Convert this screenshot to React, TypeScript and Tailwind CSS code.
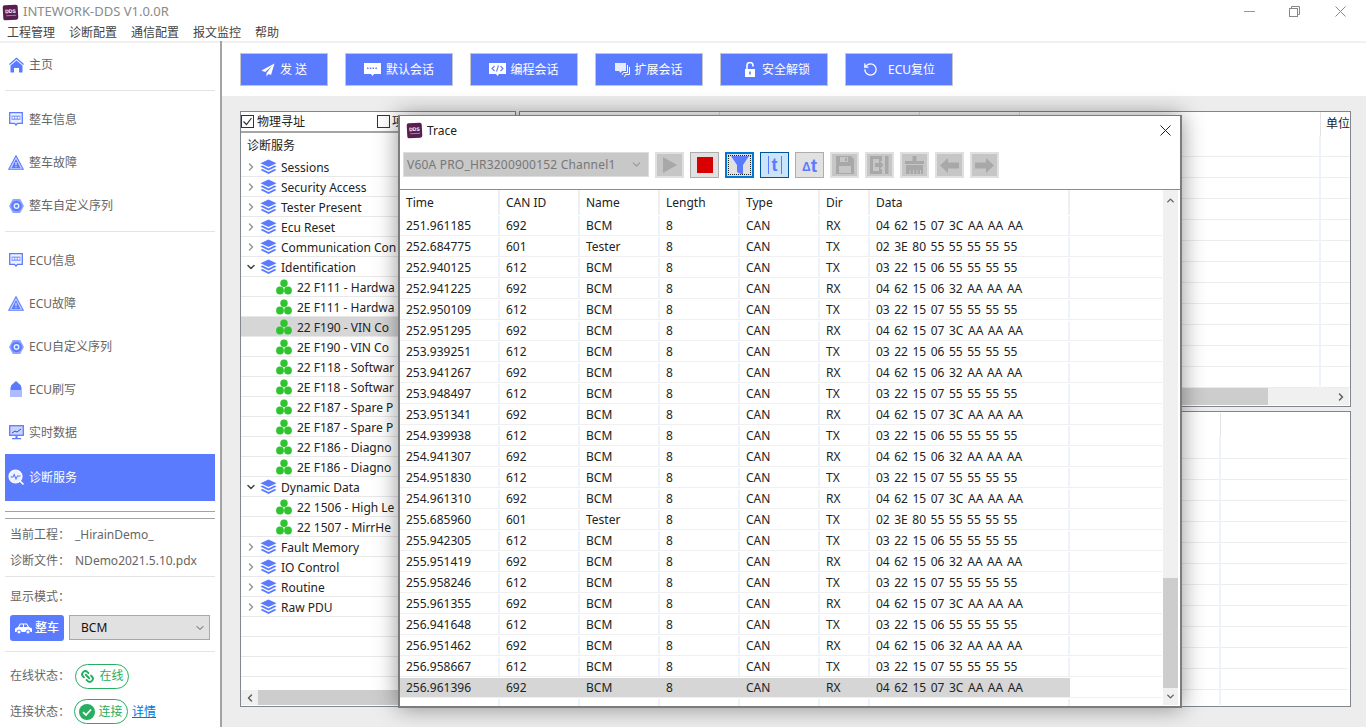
import React from "react";
import { ChevronRight, ChevronDown, ChevronUp, ChevronLeft, RotateCcw, Link2 } from "lucide-react";

const BLUE = "#5b7bff";

function Logo({ s = 16 }: { s?: number }) {
  return (
    <div className="flex flex-col items-center justify-center rounded-[2px] bg-[#5a1d52] text-white font-bold shrink-0 -rotate-3" style={{ width: s, height: s }}>
      <span className="text-[5px] leading-none font-['Liberation_Sans',sans-serif]">DDS</span>
      <span className="w-[10px] h-px bg-[#5fae6a] mt-px" />
    </div>
  );
}

const Home = () => (
  <svg width="15" height="16" viewBox="0 0 15 16"><path d="M7.500 .5 15 7l-.8 1L7.500 2.300 .8 8 0 7z" fill={BLUE} /><path d="M7.500 3.500 13.500 8.500V15.500H10V11H5v4.500H1.500V8.500z" fill={BLUE} /></svg>
);
const Msg = () => (
  <svg width="14" height="15" viewBox="0 0 14 15"><path d="M.7.7h12.600v10.600H8.500L7 13 5.500 11.300H.7z" fill="#eef1ff" stroke={BLUE} strokeWidth="1.300" /><rect x="2.500" y="3.500" width="9" height="4.500" fill="#8fa5ff" /><path d="M3.500 5h1.500v1.500H3.500zM6.200 5h1.500v1.500H6.200zM9 5h1.500v1.500H9z" fill="#fff" /></svg>
);
const Tri = () => (
  <svg width="16" height="15" viewBox="0 0 16 15"><path d="M8 .8 15.300 14.300H.7z" fill="#c9d3ff" stroke={BLUE} strokeWidth="1.100" /><path d="M8 4 12.500 13h-9z" fill={BLUE} /><path d="M7.400 7h1.200v3H7.400zM7.400 11h1.200v1H7.400z" fill="#dfe5ff" /></svg>
);
const Hex = () => (
  <svg width="15" height="14" viewBox="0 0 15 14"><path d="M3.800 0h7.400L15 7l-3.800 7H3.800L0 7z" fill="#8fa5ff" /><circle cx="7.500" cy="7" r="5.300" fill={BLUE} /><circle cx="7.500" cy="7" r="3" fill="#e8ecff" /><circle cx="7.500" cy="7" r="1.500" fill={BLUE} /></svg>
);
const Flash = () => (
  <svg width="12" height="17" viewBox="0 0 12 17"><path d="M6 0 11 4.500V9H1V4.500z" fill={BLUE} /><path d="M.5 6h1v10h-1zM10.500 6h1v10h-1z" fill={BLUE} /><path d="M1.500 9h9v7h-9z" fill="#aebcff" /></svg>
);
const Monitor = () => (
  <svg width="15" height="15" viewBox="0 0 15 15"><rect x=".7" y=".7" width="13.600" height="9.600" fill="#c9d3ff" stroke={BLUE} strokeWidth="1.300" /><path d="M3 8l3-2 2 1 4-3" fill="none" stroke="#3550c8" strokeWidth="1" /><path d="M6.500 11h2v2h-2zM3 13h9v1.300H3z" fill={BLUE} /></svg>
);
const Diag = () => (
  <svg width="17" height="17" viewBox="0 0 17 17"><circle cx="7.500" cy="7.500" r="6.500" fill="#eef1ff" stroke="#fff" strokeWidth="1.200" /><path d="M2.500 8H5l1.200-2.500L8 10l1.500-3H12.500" fill="none" stroke={BLUE} strokeWidth="1.100" /><path d="M12 12l3.500 3.500" stroke="#fff" strokeWidth="1.700" /></svg>
);
const Layers = () => (
  <svg width="17" height="16" viewBox="0 0 17 16" className="shrink-0">
    <path d="M8.500.5 16.500 4.200 8.500 7.900.5 4.200z" fill={BLUE} />
    <path d="M2.500 6.500.5 7.500l8 3.900 8-3.900-2-1-6 2.900z" fill={BLUE} />
    <path d="M2.500 10 .5 11l8 4 8-4-2-1-6 3z" fill={BLUE} />
  </svg>
);
const Leaf = () => (
  <svg width="16" height="16" viewBox="0 0 16 16" className="shrink-0">
    <circle cx="8" cy="4.200" r="3.700" fill="#2dc42d" />
    <circle cx="4" cy="11.500" r="3.900" fill="#2dc42d" />
    <circle cx="12" cy="11.500" r="3.900" fill="#2dc42d" />
  </svg>
);

const Send = () => (
  <svg width="14" height="14" viewBox="0 0 14 14"><path d="M13.500.5 .5 7.500l3.500 1.500 7-6-5.500 7v3.500l2-2.500 2.500 1z" fill="#fff" /></svg>
);
const Bubble = () => (
  <svg width="17" height="15" viewBox="0 0 17 15"><path d="M0 1h17v11H10l-1.500 2L7 12H0z" fill="#fff" /><path d="M3 5.500h1.500V7H3zM5.800 5.500h1.500V7H5.800zM8.600 5.500h1.500V7H8.600zM11.400 5.500h1.500V7h-1.500z" fill={BLUE} /></svg>
);
const Code = () => (
  <svg width="17" height="15" viewBox="0 0 17 15"><path d="M0 1h17v11H10l-1.500 2L7 12H0z" fill="#fff" /><path d="M5.500 4 3 6.500 5.500 9M11.500 4 14 6.500 11.500 9M9.500 3.500l-2 6" fill="none" stroke={BLUE} strokeWidth="1.100" /></svg>
);
const Ext = () => (
  <svg width="15" height="16" viewBox="0 0 15 16"><path d="M0 1h11v8H7l-1.500 2L4 9H0z" fill="#e6eaff" /><path d="M12.500 3v7.500H8.500L7 13M14.500 5v7.500h-4L9.500 15" fill="none" stroke="#fff" strokeWidth="1" /></svg>
);
const Unlock = () => (
  <svg width="12" height="15" viewBox="0 0 12 15"><path d="M1 7h10v8H1z" fill="#fff" /><path d="M3 7V3.500a3 3 0 0 1 6 0V4.500" fill="none" stroke="#fff" strokeWidth="1.600" /><path d="M5.200 9.500h1.600v3H5.200z" fill={BLUE} /></svg>
);

function Tool({ w, gap = "gap-[5px]", icon, children }: { w: string; gap?: string; icon: React.ReactNode; children: React.ReactNode }) {
  return (
    <button className={`${w} ${gap} h-[33px] flex items-center justify-center bg-[#5b7bff] border border-[#c4c6cc] text-white text-[12px] shrink-0`}>
      {icon}
      <span className="whitespace-pre">{children}</span>
    </button>
  );
}

function Nav({ icon, label, active, h = "h-[43px]" }: { icon: React.ReactNode; label: string; active?: boolean; h?: string }) {
  return (
    <div className={`${h} shrink-0 mx-[5px] pl-[2px] flex items-center gap-[4px] text-[12px] ${active ? "bg-[#5b7bff] text-white" : "text-[#666]"}`}>
      <span className="w-[18px] flex justify-center shrink-0">{icon}</span>
      <span>{label}</span>
    </div>
  );
}

const Rule = ({ c = "bg-[#e4e4e4]" }: { c?: string }) => <div className={`h-px mx-[5px] shrink-0 ${c}`} />;
const Gap = ({ c }: { c: string }) => <div className={`shrink-0 ${c}`} />;

type Node = { t: string; kind: "open" | "closed" | "leaf"; sel?: boolean };
const tree: Node[] = [
  { t: "Sessions", kind: "closed" },
  { t: "Security Access", kind: "closed" },
  { t: "Tester Present", kind: "closed" },
  { t: "Ecu Reset", kind: "closed" },
  { t: "Communication Con", kind: "closed" },
  { t: "Identification", kind: "open" },
  { t: "22 F111 - Hardwa", kind: "leaf" },
  { t: "2E F111 - Hardwa", kind: "leaf" },
  { t: "22 F190 - VIN Co", kind: "leaf", sel: true },
  { t: "2E F190 - VIN Co", kind: "leaf" },
  { t: "22 F118 - Softwar", kind: "leaf" },
  { t: "2E F118 - Softwar", kind: "leaf" },
  { t: "22 F187 - Spare P", kind: "leaf" },
  { t: "2E F187 - Spare P", kind: "leaf" },
  { t: "22 F186 - Diagno", kind: "leaf" },
  { t: "2E F186 - Diagno", kind: "leaf" },
  { t: "Dynamic Data", kind: "open" },
  { t: "22 1506 - High Le", kind: "leaf" },
  { t: "22 1507 - MirrHe", kind: "leaf" },
  { t: "Fault Memory", kind: "closed" },
  { t: "IO Control", kind: "closed" },
  { t: "Routine", kind: "closed" },
  { t: "Raw PDU", kind: "closed" },
];

function TreeRow({ n }: { n: Node }) {
  return (
    <div className={`h-[20px] flex items-center border-b border-[#e8e8e8] whitespace-nowrap overflow-hidden ${n.sel ? "bg-[#d6d6d6]" : ""}`}>
      {n.kind === "leaf" ? (
        <span className="flex items-center gap-[5px] pl-[35px]"><Leaf /><span className="pt-[2px]">{n.t}</span></span>
      ) : (
        <>
          <span className="w-[19px] flex justify-center pl-[1px] shrink-0">
            {n.kind === "open" ? <ChevronDown size={12} strokeWidth={3} color="#444" /> : <ChevronRight size={12} strokeWidth={3} color="#999" />}
          </span>
          <Layers />
          <span className="ml-[4px] pt-[2px]">{n.t}</span>
        </>
      )}
    </div>
  );
}

const d7 = "03 22 15 07 55 55 55 55";
const d6 = "03 22 15 06 55 55 55 55";
const r7 = "04 62 15 07 3C AA AA AA";
const r6 = "04 62 15 06 32 AA AA AA";
const tp = "02 3E 80 55 55 55 55 55";
const rows: [string, string, string, string, string][] = [
  ["251.961185", "692", "BCM", "RX", r7],
  ["252.684775", "601", "Tester", "TX", tp],
  ["252.940125", "612", "BCM", "TX", d6],
  ["252.941225", "692", "BCM", "RX", r6],
  ["252.950109", "612", "BCM", "TX", d7],
  ["252.951295", "692", "BCM", "RX", r7],
  ["253.939251", "612", "BCM", "TX", d6],
  ["253.941267", "692", "BCM", "RX", r6],
  ["253.948497", "612", "BCM", "TX", d7],
  ["253.951341", "692", "BCM", "RX", r7],
  ["254.939938", "612", "BCM", "TX", d6],
  ["254.941307", "692", "BCM", "RX", r6],
  ["254.951830", "612", "BCM", "TX", d7],
  ["254.961310", "692", "BCM", "RX", r7],
  ["255.685960", "601", "Tester", "TX", tp],
  ["255.942305", "612", "BCM", "TX", d6],
  ["255.951419", "692", "BCM", "RX", r6],
  ["255.958246", "612", "BCM", "TX", d7],
  ["255.961355", "692", "BCM", "RX", r7],
  ["256.941648", "612", "BCM", "TX", d6],
  ["256.951462", "692", "BCM", "RX", r6],
  ["256.958667", "612", "BCM", "TX", d7],
  ["256.961396", "692", "BCM", "RX", r7],
];

const cols = ["w-[100px]", "w-[80px]", "w-[80px]", "w-[80px]", "w-[80px]", "w-[50px]", "w-[200px] [word-spacing:1.4px]"];

function TraceRow({ cells, sel, h = "h-[21px]", head }: { cells: string[]; sel?: boolean; h?: string; head?: boolean }) {
  return (
    <div className={`${h} flex ${head ? "" : "border-b border-[#f0f0f0] pt-px"}`}>
      {cols.map((c, i) => (
        <div key={c} className={`${c} shrink-0 pl-[6px] flex items-center whitespace-nowrap border-r-2 ${sel ? "bg-[#d6d6d6] border-[#d6d6d6]" : head ? "border-[#efefef]" : "border-[#eef3fb]"}`}>
          {cells[i]}
        </div>
      ))}
      <div className="flex-1" />
    </div>
  );
}

function TBtn({ cls, children }: { cls: string; children: React.ReactNode }) {
  return <div className={`w-[29px] h-[26px] flex items-center justify-center shrink-0 ${cls}`}>{children}</div>;
}
const off = "bg-[#c6c6c6] border-2 border-[#e0e0e0]";
const G = "#a8a8a8";

function Trace() {
  return (
    <div className="absolute left-[398px] top-[115px] w-[784px] h-[593px] bg-white border-[#7a7d80] border-t border-x-2 border-b-2 shadow-[0_0_22px_rgba(0,0,0,0.42)] flex flex-col text-[12px] text-[#222]">
      <div className="h-[29px] flex items-center pl-[7px] shrink-0">
        <Logo s={15} />
        <span className="ml-[5px]">Trace</span>
        <svg width="11" height="11" viewBox="0 0 11 11" className="ml-auto mr-[9px]"><path d="M.5.5l10 10M10.500.5l-10 10" stroke="#222" strokeWidth="1" /></svg>
      </div>
      <div className="h-[45px] flex gap-[6px] pl-[3px] pt-[7px] shrink-0 border-b border-[#8c8c8c]">
        <div className="w-[246px] h-[25px] bg-[#c8c8c8] border border-[#dcdcdc] flex items-center pl-[3px] text-[#777] whitespace-nowrap tracking-[0.2px]">
          <span>V60A PRO_HR3200900152 Channel1</span>
          <ChevronDown size={13} color="#999" className="ml-auto mr-[5px]" />
        </div>
        <TBtn cls={off}><svg width="14" height="16" viewBox="0 0 14 16"><path d="M0 0 14 8 0 16z" fill={G} /></svg></TBtn>
        <TBtn cls="bg-[#e1e1e1] border border-[#adadad]"><span className="w-[16px] h-[16px] bg-[#d80000]" /></TBtn>
        <TBtn cls="bg-[#e1e1e1] border-2 border-[#0078d7] outline-1 outline-dotted -outline-offset-4 outline-[#222]"><svg width="18" height="19" viewBox="0 0 18 19"><path d="M0 0h18l-6 9v10l-6-3V9z" fill={BLUE} /></svg></TBtn>
        <TBtn cls="bg-[#cce4f7] border border-[#005499]">
          <span className="flex items-center gap-[3px]">
            <span className="w-px h-[18px] bg-[#5b7bff]" />
            <span className="text-[#5b7bff] font-bold text-[18px] leading-none font-['Liberation_Sans',sans-serif]">t</span>
            <span className="w-px h-[18px] bg-[#5b7bff]" />
          </span>
        </TBtn>
        <TBtn cls="bg-[#e1e1e1] border border-[#adadad]"><span className="text-[#5b7bff] font-bold text-[19px] leading-none font-['Liberation_Sans',sans-serif] flex items-end"><span className="text-[12px] leading-[15px]">Δ</span>t</span></TBtn>
        <TBtn cls={off}><svg width="18" height="18" viewBox="0 0 18 18"><path d="M0 0h15l3 3v15H0z" fill={G} /><path d="M4 1h8v5H4z" fill="#c6c6c6" /><path d="M9 2h2v3H9z" fill={G} /><path d="M3 10h12v7H3z" fill="#c6c6c6" /></svg></TBtn>
        <TBtn cls={off}><svg width="19" height="18" viewBox="0 0 19 18"><path d="M0 0h12v5H9V3H3v12h6v-2h3v5H0z" fill={G} /><path d="M5 7h4V4l4.500 5L9 14v-3H5z" fill={G} /><path d="M15 0h3.500v18H15z" fill={G} /></svg></TBtn>
        <TBtn cls={off}><svg width="19" height="18" viewBox="0 0 19 18"><path d="M7.500 0h4v5H19v3H0V5h7.500z" fill={G} /><path d="M1 9h17v9h-2v-4h-1v4h-2.500v-4h-1v4H9v-4H8v4H5.500v-4h-1v4H1z" fill={G} /></svg></TBtn>
        <TBtn cls={off}><svg width="19" height="15" viewBox="0 0 19 15"><path d="M8 0v4.500h11v6H8V15L0 7.500z" fill={G} /></svg></TBtn>
        <TBtn cls={off}><svg width="19" height="15" viewBox="0 0 19 15"><path d="M11 0v4.500H0v6h11V15l8-7.500z" fill={G} /></svg></TBtn>
      </div>
      <div className="flex-1 flex min-h-0 overflow-hidden">
        <div className="flex-1 pr-[1px] overflow-hidden">
          <TraceRow head h="h-[25px]" cells={["Time", "CAN ID", "Name", "Length", "Type", "Dir", "Data"]} />
          {rows.map((r, i) => (
            <TraceRow key={r[0]} sel={i === rows.length - 1} cells={[r[0], r[1], r[2], "8", "CAN", r[3], r[4]]} />
          ))}
          <TraceRow cells={["", "", "", "", "", "", ""]} />
        </div>
        <div className="w-[15px] shrink-0 mb-px bg-[#f0f0f0] flex flex-col items-center">
          <div className="h-[20px] flex items-center"><ChevronUp size={11} strokeWidth={3} color="#606060" /></div>
          <div className="flex-1" />
          <div className="h-[110px] w-full bg-[#cdcdcd]" />
          <div className="h-[17px] flex items-center"><ChevronDown size={11} strokeWidth={3} color="#606060" /></div>
        </div>
        <div className="w-[2px]" />
      </div>
    </div>
  );
}

function BgLines({ n }: { n: number }) {
  return (
    <>
      {Array.from({ length: n }).map((_, i) => (
        <div key={i} className="h-[21px] border-b border-[#ededed]" />
      ))}
    </>
  );
}

export default function App() {
  return (
    <div className="relative w-[1366px] h-[727px] overflow-hidden bg-white flex flex-col font-['Noto_Sans','Noto_Sans_CJK_SC',sans-serif]">
      {/* title */}
      <div className="h-[22px] flex items-center pl-[3px] pt-[2px] shrink-0 text-[#8a8a8a] text-[13px]">
        <Logo s={15} />
        <span className="ml-[5px]">INTEWORK-DDS V1.0.0R</span>
        <div className="ml-auto flex items-center pr-[20px] pb-[2px]">
          <svg width="11" height="11" viewBox="0 0 11 11"><path d="M0 5.500h11" stroke="#999" /></svg>
          <svg width="11" height="11" viewBox="0 0 11 11" fill="none" stroke="#888" className="ml-[34px]"><rect x=".5" y="2.500" width="8" height="8" /><path d="M2.500 2.500V.5h8v8h-2" /></svg>
          <svg width="11" height="11" viewBox="0 0 11 11" className="ml-[35px]"><path d="M.5.5l10 10M10.500.5l-10 10" stroke="#888" /></svg>
        </div>
      </div>
      <div className="h-[19px] flex items-center gap-[14px] pl-[7px] pt-[2px] text-[12px] text-[#444] shrink-0">
        <span>工程管理</span><span>诊断配置</span><span>通信配置</span><span>报文监控</span><span>帮助</span>
      </div>
      <div className="h-[2px] bg-[#f0f0f0] shrink-0" />
      <div className="flex-1 flex min-h-0">
        {/* sidebar */}
        <aside className="w-[222px] shrink-0 border-r-2 border-[#a3a3a3] flex flex-col overflow-hidden -mt-[2px] pt-[2px]">
          <Nav h="h-[44px]" icon={<Home />} label="主页" />
          <Gap c="h-[3px]" />
          <Rule />
          <Gap c="h-[7px]" />
          <Nav icon={<Msg />} label="整车信息" />
          <Nav icon={<Tri />} label="整车故障" />
          <Nav icon={<Hex />} label="整车自定义序列" />
          <Gap c="h-[4px]" />
          <Rule />
          <Gap c="h-[7px]" />
          <Nav icon={<Msg />} label="ECU信息" />
          <Nav icon={<Tri />} label="ECU故障" />
          <Nav icon={<Hex />} label="ECU自定义序列" />
          <Nav icon={<Flash />} label="ECU刷写" />
          <Nav icon={<Monitor />} label="实时数据" />
          <Nav h="h-[47px]" active icon={<Diag />} label="诊断服务" />
          <Gap c="h-[10px]" />
          <Rule c="bg-[#a3a3a3]" />
          <Gap c="h-[6px]" />
          <Rule c="bg-[#a3a3a3]" />
          <div className="text-[12px] text-[#666] pl-[10px] shrink-0">
            <div className="h-[26px] mt-[3px] flex items-center"><span className="w-[65px]">当前工程：</span><span>_HirainDemo_</span></div>
            <div className="h-[26px] flex items-center"><span className="w-[65px]">诊断文件：</span><span>NDemo2021.5.10.pdx</span></div>
          </div>
          <Gap c="h-[2px]" />
          <Rule />
          <div className="h-[38px] pl-[10px] pt-[2px] flex items-center text-[12px] text-[#666] shrink-0">显示模式：</div>
          <div className="h-[26px] flex gap-[5px] pl-[10px] pr-[10px] shrink-0">
            <div className="w-[54px] h-[26px] rounded-[3px] bg-[#5b7bff] text-white text-[12px] font-medium flex items-center justify-center gap-[3px]">
              <svg width="17" height="11" viewBox="0 0 17 11"><path d="M3 4 5 .5h7L14 4l3 1.500V9H0V5.500z" fill="#fff" /><path d="M5.500 1.500h2.500V4H4.300zM9 1.500h2.500L12.700 4H9z" fill={BLUE} /><circle cx="4" cy="9" r="2" fill="#fff" stroke={BLUE} /><circle cx="13" cy="9" r="2" fill="#fff" stroke={BLUE} /></svg>
              整车
            </div>
            <div className="flex-1 h-[25px] bg-[#e1e1e1] border border-[#a9a9a9] flex items-center pl-[11px] text-[12px] text-[#111]">
              BCM
              <ChevronDown size={12} color="#555" className="ml-auto mr-[3px]" />
            </div>
          </div>
          <Gap c="h-[10px]" />
          <Rule />
          <div className="pl-[10px] text-[12px] text-[#666] shrink-0">
            <div className="h-[36px] mt-[6px] flex items-center">
              <span className="w-[65px]">在线状态：</span>
              <span className="h-[25px] w-[54px] rounded-full border border-[#27ae60] text-[#27ae60] flex items-center justify-center gap-[4px]"><Link2 size={15} strokeWidth={3} className="rotate-45" />在线</span>
            </div>
            <div className="h-[35px] flex items-center">
              <span className="w-[64px]">连接状态：</span>
              <span className="h-[25px] w-[54px] rounded-full border border-[#27ae60] text-[#27ae60] flex items-center justify-center gap-[3px]">
                <svg width="16" height="16" viewBox="0 0 16 16"><circle cx="8" cy="8" r="8" fill="#27ae60" /><path d="M4 8.200 7 11l5-5.500" fill="none" stroke="#fff" strokeWidth="1.800" /></svg>
                连接
              </span>
              <span className="ml-[4px] text-[#0078d7] underline">详情</span>
            </div>
          </div>
        </aside>
        {/* main */}
        <main className="flex-1 min-w-0 flex flex-col bg-[#ededed]">
          <div className="h-[53px] shrink-0 bg-white flex items-start gap-[17px] pl-[18px] pt-[10px]">
            <Tool w="w-[88px]" icon={<Send />}>{"发 送"}</Tool>
            <Tool w="w-[108px]" icon={<Bubble />}>默认会话</Tool>
            <Tool w="w-[108px]" gap="gap-[4px]" icon={<Code />}>编程会话</Tool>
            <Tool w="w-[108px]" gap="gap-[4px]" icon={<Ext />}>扩展会话</Tool>
            <Tool w="w-[108px]" gap="gap-[6px] pl-[6px]" icon={<Unlock />}>安全解锁</Tool>
            <Tool w="w-[108px]" gap="gap-[10px]" icon={<RotateCcw size={15} strokeWidth={2} />}>ECU复位</Tool>
          </div>
          <div className="flex-1 min-h-0 flex gap-[3px] pl-[18px] pr-[15px] pt-[15px] pb-[20px]">
            {/* tree */}
            <div className="w-[276px] shrink-0 bg-white border border-[#80868c] flex flex-col text-[12px] text-[#222] overflow-hidden">
              <div className="h-[21px] flex items-center border-b-2 border-[#a5a5a5] text-[#222] shrink-0">
                <span className="w-[13px] h-[13px] border border-[#333] flex items-center justify-center"><svg width="11" height="11" viewBox="0 0 11 11"><path d="M1.500 5.500 4.500 8.500 9.500 2" fill="none" stroke="#333" strokeWidth="1.200" /></svg></span>
                <span className="ml-[3px]">物理寻址</span>
                <span className="ml-[72px] w-[13px] h-[13px] border border-[#333]" />
                <span className="ml-[2px]">项</span>
              </div>
              <div className="h-[24px] pl-[6px] pt-[2px] flex items-center shrink-0">诊断服务</div>
              <div className="flex-1 min-h-0">
                {tree.map((n) => <TreeRow key={n.t} n={n} />)}
                <div className="h-[20px] border-b border-[#e8e8e8]" />
                <div className="h-[20px] border-b border-[#e8e8e8]" />
                <div className="h-[20px] border-b border-[#e8e8e8]" />
              </div>
              <div className="h-[15px] mb-px bg-[#f0f0f0] flex shrink-0">
                <div className="w-[17px] flex items-center justify-center"><ChevronLeft size={12} strokeWidth={3} color="#606060" /></div>
                <div className="flex-1 bg-[#cdcdcd]" />
              </div>
            </div>
            {/* right */}
            <div className="flex-1 min-w-0 flex flex-col gap-[4px]">
              <div className="h-[296px] shrink-0 bg-white border border-[#80868c] flex flex-col text-[12px] overflow-hidden">
                <div className="h-[24px] shrink-0 flex">
                  <div className="w-[200px] border-r border-[#e2e2e2]" />
                  <div className="w-[200px] border-r border-[#e2e2e2]" />
                  <div className="w-[100px] border-r border-[#e2e2e2]" />
                  <div className="flex-1 border-r border-[#e2e2e2]" />
                  <div className="w-[29px] pl-[5px] flex items-center whitespace-nowrap text-[#222] overflow-hidden">单位</div>
                </div>
                <div className="flex-1 min-h-0 overflow-hidden relative">
                  <BgLines n={12} />
                  <div className="absolute right-[29px] top-0 bottom-0 w-[2px] bg-[#eef3fb]" />
                </div>
                <div className="h-[17px] mb-px mx-px bg-[#f0f0f0] flex shrink-0">
                  <div className="w-[747px] bg-[#cdcdcd]" />
                  <div className="ml-auto w-[17px] flex items-center justify-center"><ChevronRight size={12} strokeWidth={3} color="#606060" /></div>
                </div>
              </div>
              <div className="flex-1 min-h-0 bg-white border border-[#80868c] overflow-hidden relative pr-[2px]">
                <div className="h-[26px]" />
                <BgLines n={12} />
                <div className="absolute right-[129px] top-[1px] h-[24px] w-px bg-[#e2e2e2]" />
                <div className="absolute right-[129px] top-[25px] bottom-[1px] w-[2px] bg-[#eef3fb]" />
              </div>
            </div>
          </div>
        </main>
      </div>
      <Trace />
    </div>
  );
}
